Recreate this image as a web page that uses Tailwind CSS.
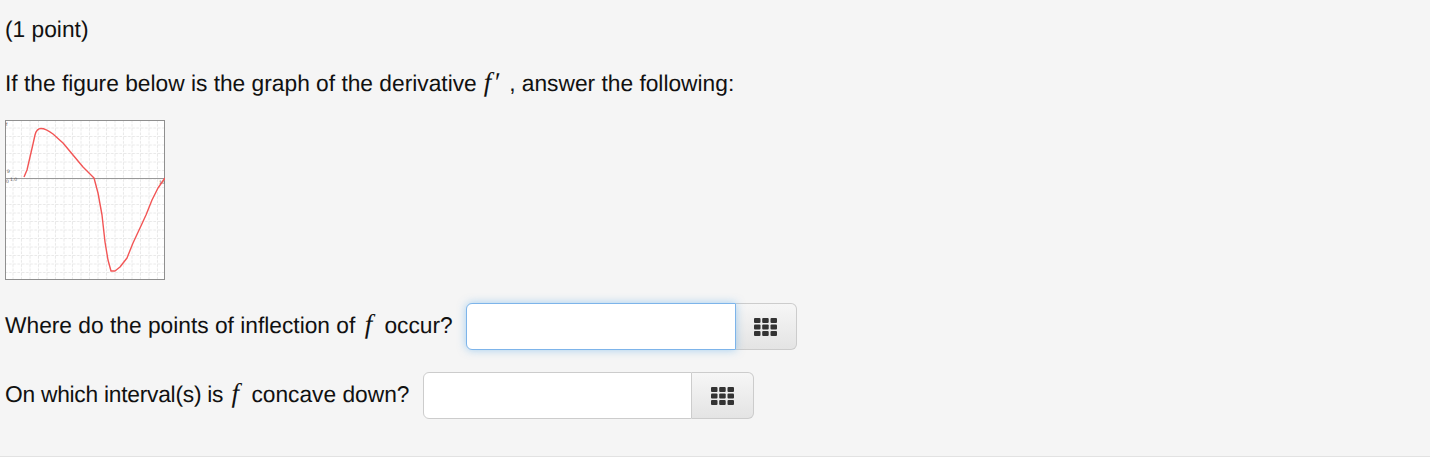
<!doctype html>
<html>
  <head>
    <meta charset="UTF-8" />
    <title>Problem</title>
    <script src="https://cdn.jsdelivr.net/npm/@tailwindcss/browser@4"></script>
  </head>

  <body class="bg-white">
    <div class="h-[457px] bg-[#f5f5f5] border-b border-[#e2e2e2] pl-[5px] pt-[14px] font-['Liberation_Sans',Arial,sans-serif] text-[22.75px] leading-[30px] text-[#111] [text-rendering:geometricPrecision] overflow-hidden">
      <p>(1 point)</p>
      <p class="mt-[23px] h-[30px] flex items-baseline">If the figure below is the graph of the derivative <span class="font-['Liberation_Serif',serif] italic text-[27px] ml-[7px]">f</span><span class="font-['Liberation_Serif',serif] italic text-[27px] ml-[2px] mr-[10px]">&#8242;</span>, answer the following:</p>

      <!-- graph of f' -->
      <svg class="block mt-[23px]" width="160" height="160" viewBox="0 0 160 160">
        <defs>
          <pattern id="grid" width="8.5" height="8.5" patternUnits="userSpaceOnUse">
            <path d="M8 0V8.5M0 8H8.5" fill="none" stroke="#e8e8e8" stroke-width="1" stroke-dasharray="2.5 1.5" />
          </pattern>
        </defs>
        <rect width="160" height="160" fill="#ffffff" />
        <rect width="160" height="160" fill="url(#grid)" />
        <path d="M0 58.5H160" stroke="#999999" stroke-width="1" fill="none" />
        <rect x="0.5" y="0.5" width="159" height="159" fill="none" stroke="#8f8f8f" />
        <g font-family="Liberation Sans" font-size="5" fill="#555555">
          <text x="1" y="6">f</text>
          <text x="2" y="53">9</text>
          <text x="1" y="63">0</text>
          <text x="5" y="61">1.0</text>
          <text x="154" y="64">10</text>
        </g>
        <path d="M19 57L22 50L25 37L28 24L30 15C31 11 33 8.5 36 8.5C40 8.5 44 11 48 14L58 23L68 35L78 47L89 58L93 73L97 95L100 122L103 140L106 151L110 151L115 147L122 138L128 123L135 108L141 95L147 80L153 68L160 58" fill="none" stroke="#f25555" stroke-width="1.4" stroke-linejoin="round" />
      </svg>

      <div class="flex items-center gap-[13px] mt-[23px] h-[47px]">
        <span class="pb-[5px]">Where do the points of inflection of <span class="font-['Liberation_Serif',serif] italic text-[27px] ml-[3px] mr-[6px]">f</span> occur?</span>
        <div class="flex h-[47px]">
          <div class="w-[270px] bg-white border border-[#7db4ea] rounded-l-[6px] shadow-[0_0_8px_rgba(82,168,236,0.5)] relative"></div>
          <div class="w-[61px] flex items-center justify-center border border-l-0 border-[#cccccc] rounded-r-[6px] bg-gradient-to-b from-[#f6f6f6] to-[#e4e4e4]">
            <svg width="23" height="18" viewBox="0 0 23 18" fill="#333333">
              <rect x="0" y="0" width="6.5" height="5" rx="1" /><rect x="8.2" y="0" width="6.5" height="5" rx="1" /><rect x="16.5" y="0" width="6.5" height="5" rx="1" />
              <rect x="0" y="6.5" width="6.5" height="5" rx="1" /><rect x="8.2" y="6.5" width="6.5" height="5" rx="1" /><rect x="16.5" y="6.5" width="6.5" height="5" rx="1" />
              <rect x="0" y="13" width="6.5" height="5" rx="1" /><rect x="8.2" y="13" width="6.5" height="5" rx="1" /><rect x="16.5" y="13" width="6.5" height="5" rx="1" />
            </svg>
          </div>
        </div>
      </div>

      <div class="flex items-center gap-[13px] mt-[22px] h-[47px]">
        <span class="pb-[5px]"><span class="tracking-[-0.24px]">On which interval(s) is</span> <span class="font-['Liberation_Serif',serif] italic text-[27px] ml-[2px] mr-[6px]">f</span> concave down?</span>
        <div class="flex h-[47px]">
          <div class="w-[269px] bg-white border border-[#cccccc] rounded-l-[6px]"></div>
          <div class="w-[62px] flex items-center justify-center border border-l-0 border-[#cccccc] rounded-r-[6px] bg-gradient-to-b from-[#f6f6f6] to-[#e4e4e4]">
            <svg width="23" height="18" viewBox="0 0 23 18" fill="#333333">
              <rect x="0" y="0" width="6.5" height="5" rx="1" /><rect x="8.2" y="0" width="6.5" height="5" rx="1" /><rect x="16.5" y="0" width="6.5" height="5" rx="1" />
              <rect x="0" y="6.5" width="6.5" height="5" rx="1" /><rect x="8.2" y="6.5" width="6.5" height="5" rx="1" /><rect x="16.5" y="6.5" width="6.5" height="5" rx="1" />
              <rect x="0" y="13" width="6.5" height="5" rx="1" /><rect x="8.2" y="13" width="6.5" height="5" rx="1" /><rect x="16.5" y="13" width="6.5" height="5" rx="1" />
            </svg>
          </div>
        </div>
      </div>
    </div>
  </body>
</html>
